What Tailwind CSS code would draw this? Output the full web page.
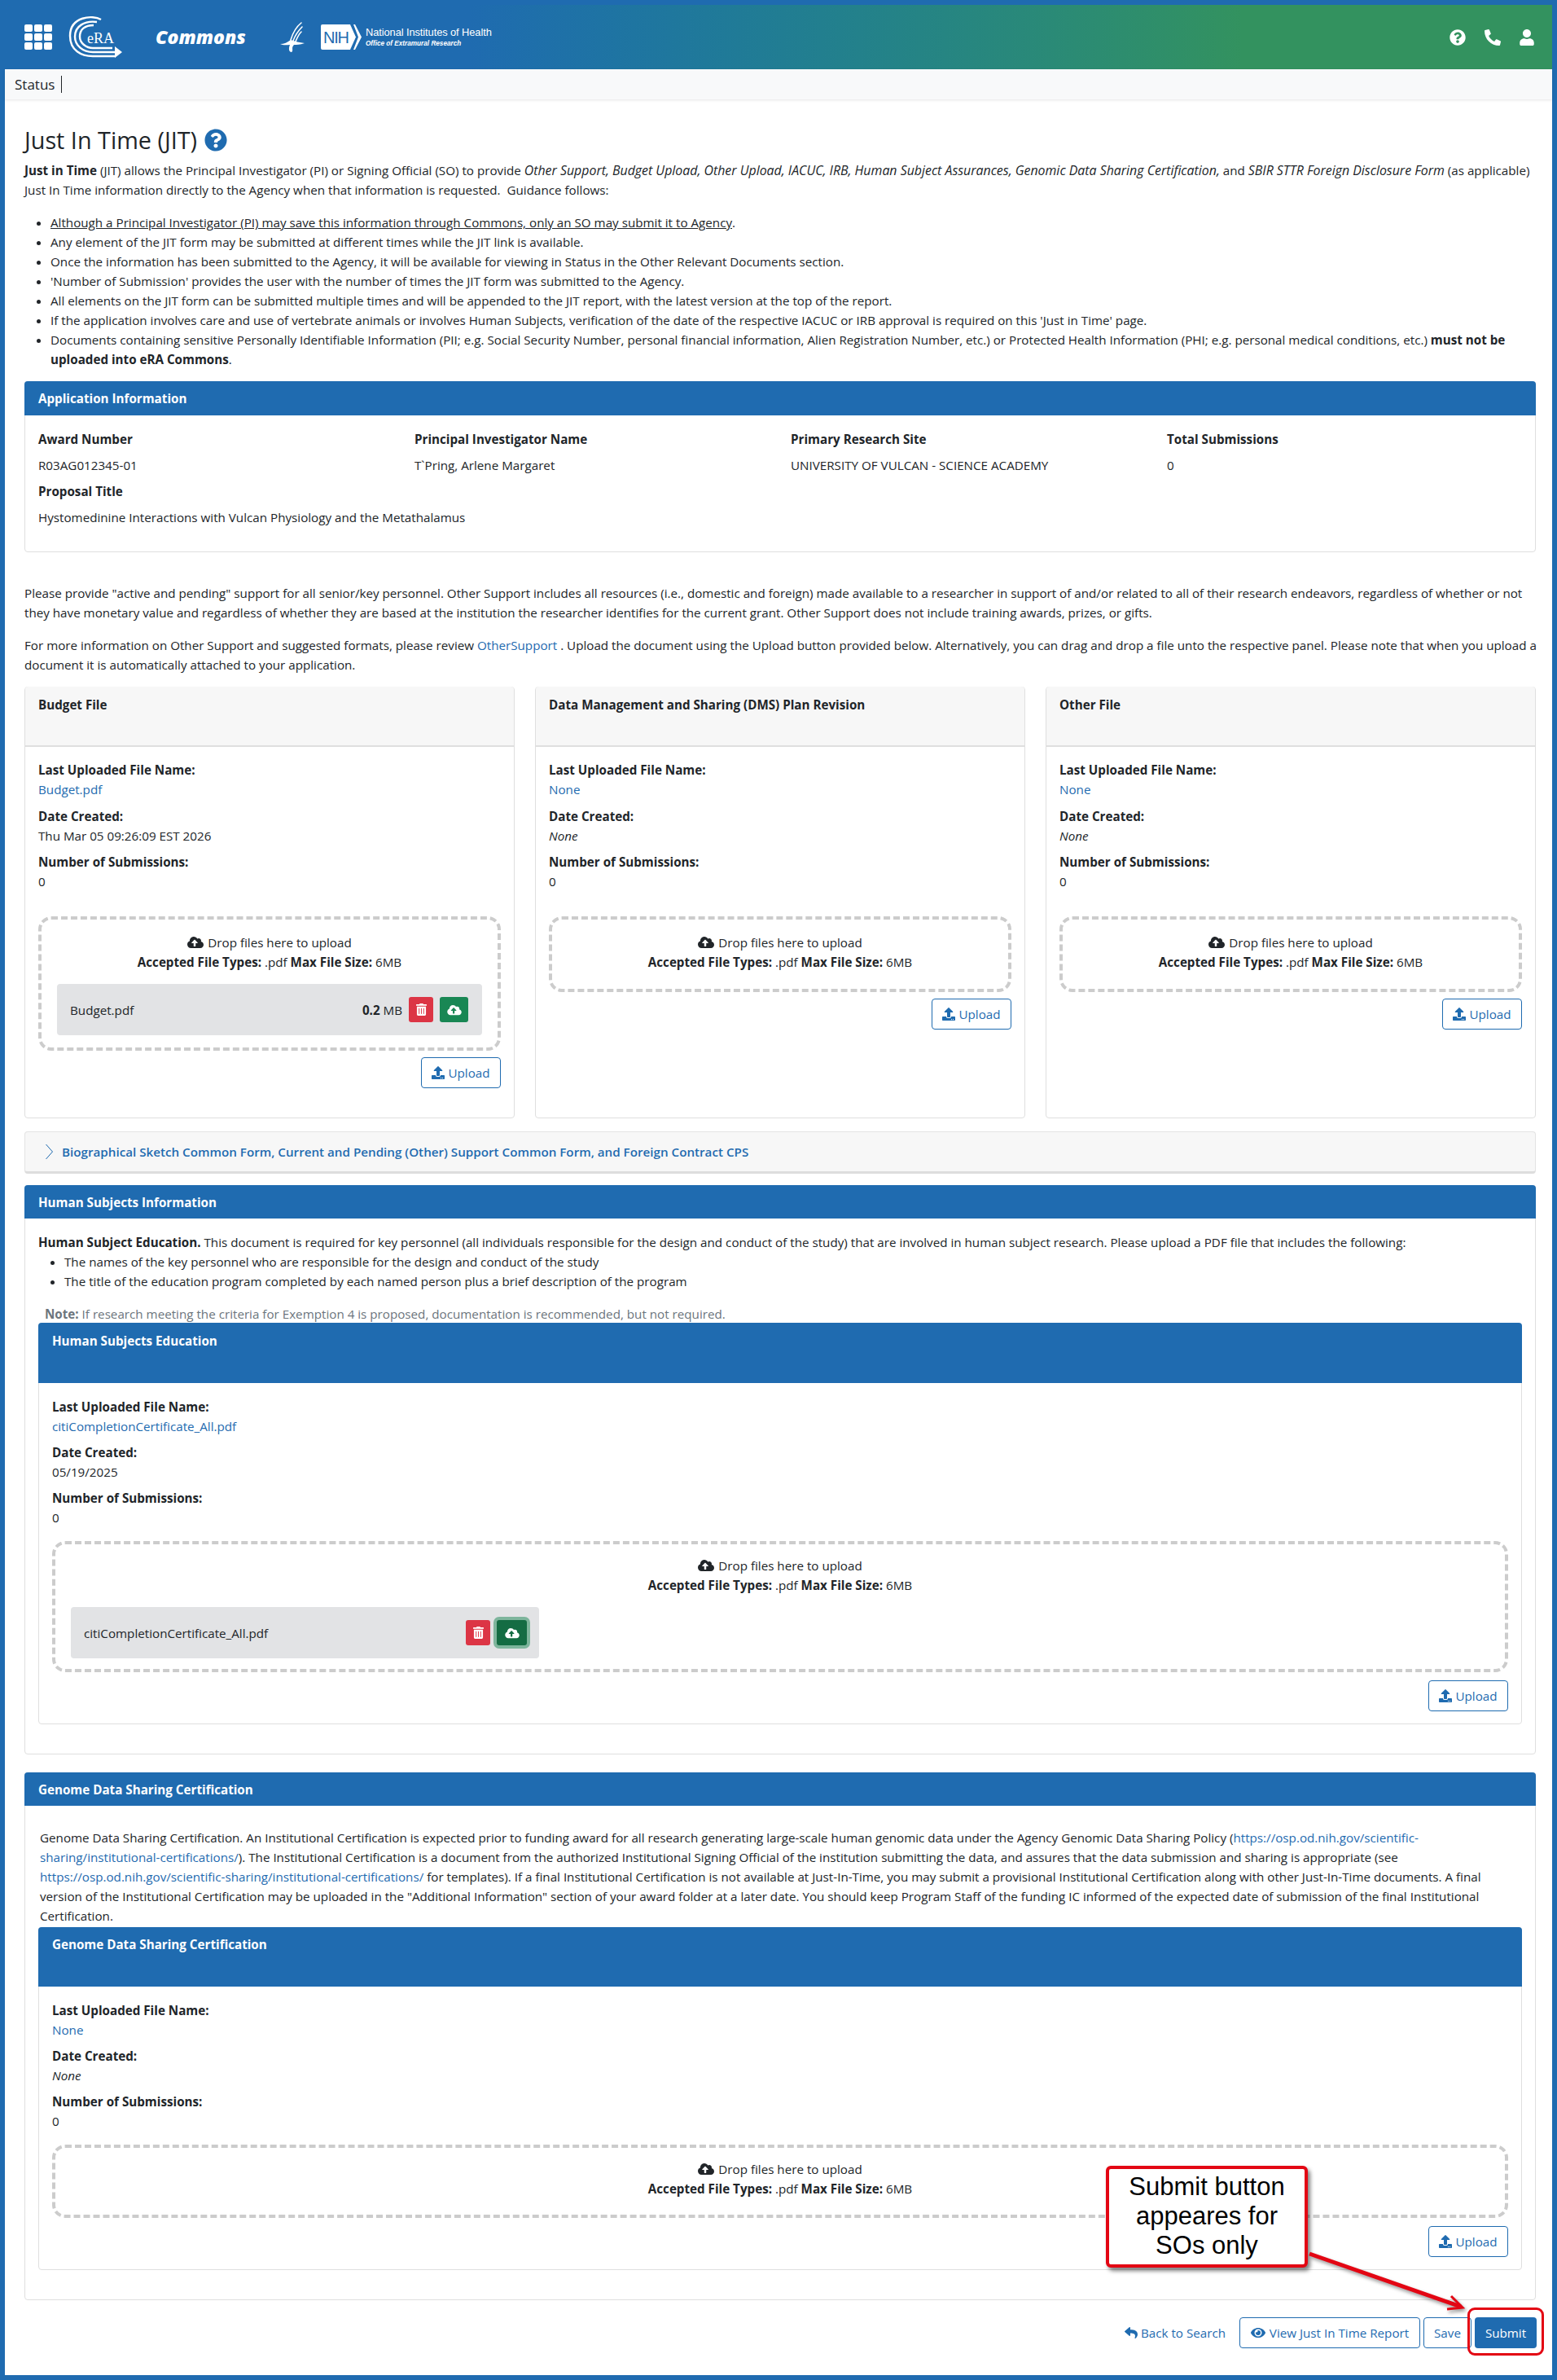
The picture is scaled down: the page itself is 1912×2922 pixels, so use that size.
<!DOCTYPE html>
<html lang="en">
  <head>
    <meta charset="UTF-8" />
    <meta name="viewport" content="width=device-width, initial-scale=1.0" />
    <title>Just In Time (JIT)</title>
    <script src="https://cdn.jsdelivr.net/npm/@tailwindcss/browser@4"></script>
  </head>
  <body class="bg-white">
    <div class="relative w-[1912px] h-[2922px] overflow-hidden font-['Open_Sans',sans-serif] text-[15.2px] leading-6 text-[#212529]">
      <div class="flex flex-col h-full border-[6px] border-[#1f6bb0] bg-white">
        <!-- header -->
        <header class="flex items-center h-[79px] shrink-0 bg-linear-to-r from-[#1f6bb0] from-[30%] to-[#33925f] to-[80%] pl-[24px] pr-[22px] text-white">
          <div class="grid grid-cols-3 gap-[2px] w-[34px]">
            <span class="h-[9px] rounded-[2px] bg-white"></span><span class="h-[9px] rounded-[2px] bg-white"></span><span class="h-[9px] rounded-[2px] bg-white"></span>
            <span class="h-[9px] rounded-[2px] bg-white"></span><span class="h-[9px] rounded-[2px] bg-white"></span><span class="h-[9px] rounded-[2px] bg-white"></span>
            <span class="h-[9px] rounded-[2px] bg-white"></span><span class="h-[9px] rounded-[2px] bg-white"></span><span class="h-[9px] rounded-[2px] bg-white"></span>
          </div>
          <svg class="ml-[20px] w-[66px] h-[55px]" viewBox="0 0 66 55" fill="none" stroke="#fff" stroke-width="2.4">
            <path d="M40 6C30 0 2 2 2 26C2 44 16 51 30 51L58 51" />
            <path d="M35 9C20 7 8 14 8 27C8 38 18 46 30 46L60 46" />
            <path d="M31 13C20 13 14 18 14 27C14 35 22 41 30 41L54 41" />
            <path d="M57 39L66 46L57 53Z" fill="#fff" stroke="none" />
            <text x="23" y="35" font-family="Liberation Serif" font-size="18" fill="#fff" stroke="none">eRA</text>
          </svg>
          <span class="ml-[41px] w-[110px] text-[23px] leading-none font-extrabold italic">Commons</span>
          <svg class="ml-[42px] w-[31px] h-[38px]" viewBox="0 0 31 38" fill="none" stroke="#fff" stroke-linecap="round">
            <path d="M27 1C22 5 17 12 14 22" stroke-width="1.6" />
            <path d="M28 6C24 10 20 15 17 23" stroke-width="1.6" />
            <path d="M27 12C24 15 22 19 20 24" stroke-width="1.6" />
            <path d="M1 27C6 27 10 25 14 22C19 24 25 25 31 26C25 28 21 28 18 28C14 32 18 35 15 37C12 37 11 33 13 28C9 28 5 29 1 27Z" fill="#fff" stroke="none" />
          </svg>
          <svg class="ml-[20px] w-[50px] h-[31px]" viewBox="0 0 50 31">
            <path d="M2 0H36L43 15.5L36 31H2Q0 31 0 29V2Q0 0 2 0Z" fill="#fff" />
            <path d="M40 0H42L50 15.5L42 31H40L46 15.5Z" fill="#fff" />
            <text x="3" y="23" font-family="Liberation Sans" font-size="20" fill="#1f6bb0" textLength="32">NIH</text>
          </svg>
          <div class="ml-[5px] flex flex-col font-['Liberation_Sans',sans-serif]">
            <span class="text-[12.9px] leading-[16px] tracking-[-0.1px]">National Institutes of Health</span>
            <span class="text-[8.2px] leading-[12px] font-bold italic">Office of Extramural Research</span>
          </div>
          <div class="ml-auto flex items-center gap-[23px]">
            <svg class="w-[20px] h-[20px]" viewBox="0 0 512 512" fill="#fff"><path d="M504 256c0 136.997-111.043 248-248 248S8 392.997 8 256C8 119.083 119.043 8 256 8s248 111.083 248 248zM262.655 90c-54.497 0-89.255 22.957-116.549 63.758-3.536 5.286-2.353 12.415 2.715 16.258l34.699 26.31c5.205 3.947 12.621 3.008 16.665-2.122 17.864-22.658 30.113-35.797 57.303-35.797 20.429 0 45.698 13.148 45.698 32.958 0 14.976-12.363 22.667-32.534 33.976C247.128 238.528 216 254.941 216 296v4c0 6.627 5.373 12 12 12h56c6.627 0 12-5.373 12-12v-1.333c0-28.462 83.186-29.647 83.186-106.667 0-58.002-60.165-102-116.531-102zM256 338c-25.365 0-46 20.635-46 46 0 25.364 20.635 46 46 46s46-20.636 46-46c0-25.365-20.635-46-46-46z" /></svg>
            <svg class="w-[20px] h-[20px] -scale-x-100" viewBox="0 0 512 512" fill="#fff"><path d="M493.4 24.6l-104-24c-11.3-2.6-22.9 3.3-27.5 13.9l-48 112c-4.2 9.8-1.4 21.3 6.9 28l60.6 49.6c-36 76.7-98.9 140.5-177.2 177.2l-49.6-60.6c-6.8-8.3-18.2-11.1-28-6.9l-112 48C3.9 366.5-2 378.1.6 389.4l24 104C27.1 504.2 36.7 512 48 512c256.1 0 464-207.5 464-464 0-11.2-7.7-20.9-18.6-23.4z" /></svg>
            <svg class="w-[18px] h-[20px]" viewBox="0 0 448 512" fill="#fff"><path d="M224 256c70.7 0 128-57.3 128-128S294.7 0 224 0 96 57.3 96 128s57.3 128 128 128zm89.6 32h-16.7c-22.2 10.2-46.9 16-72.9 16s-50.6-5.8-72.9-16h-16.7C60.2 288 0 348.2 0 422.4V464c0 26.5 21.5 48 48 48h352c26.5 0 48-21.5 48-48v-41.6c0-74.2-60.2-134.4-134.4-134.4z" /></svg>
          </div>
        </header>

        <!-- status bar -->
        <nav class="flex items-center h-[37px] shrink-0 bg-[#f8f9fa] pl-[12px] shadow-[0_1px_3px_rgba(0,0,0,0.1)] text-[17px]">
          <span>Status</span>
          <span class="ml-[8px] w-px h-[21px] bg-[#212529]"></span>
        </nav>

        <main class="flex flex-col pl-6 pr-5">
          <div class="flex items-center gap-[9px] mt-[33px] h-[34px]">
            <h1 class="text-[28.8px] leading-[34px]">Just In Time (JIT)</h1>
            <svg class="w-[28px] h-[28px]" viewBox="0 0 512 512" fill="#1f6bb0"><path d="M504 256c0 136.997-111.043 248-248 248S8 392.997 8 256C8 119.083 119.043 8 256 8s248 111.083 248 248zM262.655 90c-54.497 0-89.255 22.957-116.549 63.758-3.536 5.286-2.353 12.415 2.715 16.258l34.699 26.31c5.205 3.947 12.621 3.008 16.665-2.122 17.864-22.658 30.113-35.797 57.303-35.797 20.429 0 45.698 13.148 45.698 32.958 0 14.976-12.363 22.667-32.534 33.976C247.128 238.528 216 254.941 216 296v4c0 6.627 5.373 12 12 12h56c6.627 0 12-5.373 12-12v-1.333c0-28.462 83.186-29.647 83.186-106.667 0-58.002-60.165-102-116.531-102zM256 338c-25.365 0-46 20.635-46 46 0 25.364 20.635 46 46 46s46-20.636 46-46c0-25.365-20.635-46-46-46z" /></svg>
          </div>
          <p class="mt-[8px] whitespace-nowrap"><b class="font-bold">Just in Time</b> (JIT) allows the Principal Investigator (PI) or Signing Official (SO) to provide <i class="text-[15.9px]">Other Support, Budget Upload, Other Upload, IACUC, IRB, Human Subject Assurances, Genomic Data Sharing Certification,</i> and <i class="text-[15.9px]">SBIR STTR Foreign Disclosure Form</i> (as applicable)<br />Just In Time information directly to the Agency when that information is requested.&nbsp; Guidance follows:</p>
          <ul class="mt-[16px] pl-[32px] list-disc whitespace-nowrap">
            <li><u>Although a Principal Investigator (PI) may save this information through Commons, only an SO may submit it to Agency</u>.</li>
            <li>Any element of the JIT form may be submitted at different times while the JIT link is available.</li>
            <li>Once the information has been submitted to the Agency, it will be available for viewing in Status in the Other Relevant Documents section.</li>
            <li>'Number of Submission' provides the user with the number of times the JIT form was submitted to the Agency.</li>
            <li>All elements on the JIT form can be submitted multiple times and will be appended to the JIT report, with the latest version at the top of the report.</li>
            <li>If the application involves care and use of vertebrate animals or involves Human Subjects, verification of the date of the respective IACUC or IRB approval is required on this 'Just in Time' page.</li>
            <li>Documents containing sensitive Personally Identifiable Information (PII; e.g. Social Security Number, personal financial information, Alien Registration Number, etc.) or Protected Health Information (PHI; e.g. personal medical conditions, etc.) <b class="font-bold">must not be<br />uploaded into eRA Commons</b>.</li>
          </ul>

          <!-- application information -->
          <section class="mt-[15px] h-[210px] border border-[#dfdfdf] rounded-[4px]">
            <div class="h-[42px] -mt-px -mx-px flex items-center px-[17px] bg-[#1f6bb0] text-white font-bold rounded-t-[4px]">Application Information</div>
            <div class="px-4 pt-[17px]">
              <div class="grid grid-cols-[462px_462px_462px_1fr]">
                <div><div class="font-bold">Award Number</div><div class="mt-2">R03AG012345-01</div></div>
                <div><div class="font-bold">Principal Investigator Name</div><div class="mt-2">T`Pring, Arlene Margaret</div></div>
                <div><div class="font-bold">Primary Research Site</div><div class="mt-2">UNIVERSITY OF VULCAN - SCIENCE ACADEMY</div></div>
                <div><div class="font-bold">Total Submissions</div><div class="mt-2">0</div></div>
              </div>
              <div class="mt-2 font-bold">Proposal Title</div>
              <div class="mt-2">Hystomedinine Interactions with Vulcan Physiology and the Metathalamus</div>
            </div>
          </section>

          <p class="mt-[38px] whitespace-nowrap">Please provide "active and pending" support for all senior/key personnel. Other Support includes all resources (i.e., domestic and foreign) made available to a researcher in support of and/or related to all of their research endeavors, regardless of whether or not<br />they have monetary value and regardless of whether they are based at the institution the researcher identifies for the current grant. Other Support does not include training awards, prizes, or gifts.</p>
          <p class="mt-4 whitespace-nowrap">For more information on Other Support and suggested formats, please review <a class="text-[#1f6bb0]">OtherSupport</a> . Upload the document using the Upload button provided below. Alternatively, you can drag and drop a file unto the respective panel. Please note that when you upload a<br />document it is automatically attached to your application.</p>

          <!-- upload cards -->
          <div class="mt-[15px] grid grid-cols-3 gap-[25px] h-[530px]">
            <section class="border border-[#dfdfdf] rounded-[4px]">
              <div class="h-[74px] -mt-px pt-[10px] px-4 bg-[#f7f7f7] border-b-2 border-[#dfdfdf] font-bold rounded-t-[4px]">Budget File</div>
              <div class="px-4 pt-[16px]">
                <div class="font-bold">Last Uploaded File Name:</div>
                <a class="block text-[#1f6bb0]">Budget.pdf</a>
                <div class="mt-[9px] font-bold">Date Created:</div>
                <div>Thu Mar 05 09:26:09 EST 2026</div>
                <div class="mt-[8px] font-bold">Number of Submissions:</div>
                <div>0</div>
                <div class="mt-[31px] border-[4px] border-dashed border-[#cccccc] rounded-[16px] px-[19px] pt-[16px] pb-[15px] text-center">
                  <div class="flex items-center justify-center gap-[5px]">
                    <svg class="w-[20px] h-[16px]" viewBox="0 0 640 512" fill="#212529"><path d="M537.6 226.6c4.1-10.7 6.4-22.4 6.4-34.6 0-53-43-96-96-96-19.7 0-38.1 6-53.3 16.2C367 64.2 315.3 32 256 32c-88.4 0-160 71.6-160 160 0 2.7.1 5.4.2 8.1C40.2 219.8 0 273.2 0 336c0 79.5 64.5 144 144 144h368c70.7 0 128-57.3 128-128 0-61.9-44-113.6-102.4-125.4zM393.4 288H328v112c0 8.8-7.2 16-16 16h-48c-8.8 0-16-7.2-16-16V288h-65.4c-14.3 0-21.4-17.2-11.3-27.3l105.4-105.4c6.2-6.2 16.4-6.2 22.6 0l105.4 105.4c10.1 10.1 2.9 27.3-11.3 27.3z" /></svg>
                    Drop files here to upload
                  </div>
                  <div><b class="font-bold">Accepted File Types:</b> .pdf <b class="font-bold">Max File Size:</b> 6MB</div>
                  <div class="mt-[15px] flex items-center h-[63px] bg-[#e2e3e5] rounded-[4px] pl-[16px] pr-[17px]">
                    <span>Budget.pdf</span>
                    <span class="ml-auto"><b class="font-bold">0.2</b> MB</span>
                    <span class="ml-[8px] flex items-center justify-center w-[30px] h-[31px] bg-[#dc3545] rounded-[3px]">
                      <svg class="w-[13px] h-[15px]" viewBox="0 0 448 512" fill="#fff"><path d="M32 464a48 48 0 0 0 48 48h288a48 48 0 0 0 48-48V128H32zm272-256a16 16 0 0 1 32 0v224a16 16 0 0 1-32 0zm-96 0a16 16 0 0 1 32 0v224a16 16 0 0 1-32 0zm-96 0a16 16 0 0 1 32 0v224a16 16 0 0 1-32 0zM432 32H312l-9-19a24 24 0 0 0-22-13H167a24 24 0 0 0-22 13l-9 19H16A16 16 0 0 0 0 48v32a16 16 0 0 0 16 16h416a16 16 0 0 0 16-16V48a16 16 0 0 0-16-16z" /></svg>
                    </span>
                    <span class="ml-[8px] flex items-center justify-center w-[35px] h-[31px] bg-[#198754] rounded-[3px]">
                      <svg class="w-[18px] h-[14px]" viewBox="0 0 640 512" fill="#fff"><path d="M537.6 226.6c4.1-10.7 6.4-22.4 6.4-34.6 0-53-43-96-96-96-19.7 0-38.1 6-53.3 16.2C367 64.2 315.3 32 256 32c-88.4 0-160 71.6-160 160 0 2.7.1 5.4.2 8.1C40.2 219.8 0 273.2 0 336c0 79.5 64.5 144 144 144h368c70.7 0 128-57.3 128-128 0-61.9-44-113.6-102.4-125.4zM393.4 288H328v112c0 8.8-7.2 16-16 16h-48c-8.8 0-16-7.2-16-16V288h-65.4c-14.3 0-21.4-17.2-11.3-27.3l105.4-105.4c6.2-6.2 16.4-6.2 22.6 0l105.4 105.4c10.1 10.1 2.9 27.3-11.3 27.3z" /></svg>
                    </span>
                  </div>
                </div>
                <div class="mt-[8px] flex justify-end">
                  <button class="flex items-center justify-center gap-[4px] w-[98px] h-[38px] border border-[#1f6bb0] rounded-[4px] text-[#1f6bb0]">
                    <svg class="w-[16px] h-[16px]" viewBox="0 0 512 512" fill="#1f6bb0"><path d="M296 384h-80c-13.3 0-24-10.7-24-24V192h-87.7c-17.8 0-26.7-21.5-14.1-34.1L242.3 5.7c7.5-7.5 19.8-7.5 27.3 0l152.2 152.2c12.6 12.6 3.7 34.1-14.1 34.1H320v168c0 13.3-10.7 24-24 24zm216-8v112c0 13.3-10.7 24-24 24H24c-13.3 0-24-10.7-24-24V376c0-13.3 10.7-24 24-24h136v8c0 30.9 25.1 56 56 56h80c30.9 0 56-25.1 56-56v-8h136c13.3 0 24 10.7 24 24zm-124 88c0-11-9-20-20-20s-20 9-20 20 9 20 20 20 20-9 20-20zm64 0c0-11-9-20-20-20s-20 9-20 20 9 20 20 20 20-9 20-20z" /></svg>
                    Upload
                  </button>
                </div>
              </div>
            </section>

            <section class="border border-[#dfdfdf] rounded-[4px]">
              <div class="h-[74px] -mt-px pt-[10px] px-4 bg-[#f7f7f7] border-b-2 border-[#dfdfdf] font-bold rounded-t-[4px]">Data Management and Sharing (DMS) Plan Revision</div>
              <div class="px-4 pt-[16px]">
                <div class="font-bold">Last Uploaded File Name:</div>
                <a class="block text-[#1f6bb0]">None</a>
                <div class="mt-[9px] font-bold">Date Created:</div>
                <div class="italic">None</div>
                <div class="mt-[8px] font-bold">Number of Submissions:</div>
                <div>0</div>
                <div class="mt-[31px] border-[4px] border-dashed border-[#cccccc] rounded-[16px] px-[19px] pt-[16px] pb-[21px] text-center">
                  <div class="flex items-center justify-center gap-[5px]">
                    <svg class="w-[20px] h-[16px]" viewBox="0 0 640 512" fill="#212529"><path d="M537.6 226.6c4.1-10.7 6.4-22.4 6.4-34.6 0-53-43-96-96-96-19.7 0-38.1 6-53.3 16.2C367 64.2 315.3 32 256 32c-88.4 0-160 71.6-160 160 0 2.7.1 5.4.2 8.1C40.2 219.8 0 273.2 0 336c0 79.5 64.5 144 144 144h368c70.7 0 128-57.3 128-128 0-61.9-44-113.6-102.4-125.4zM393.4 288H328v112c0 8.8-7.2 16-16 16h-48c-8.8 0-16-7.2-16-16V288h-65.4c-14.3 0-21.4-17.2-11.3-27.3l105.4-105.4c6.2-6.2 16.4-6.2 22.6 0l105.4 105.4c10.1 10.1 2.9 27.3-11.3 27.3z" /></svg>
                    Drop files here to upload
                  </div>
                  <div><b class="font-bold">Accepted File Types:</b> .pdf <b class="font-bold">Max File Size:</b> 6MB</div>
                </div>
                <div class="mt-[8px] flex justify-end">
                  <button class="flex items-center justify-center gap-[4px] w-[98px] h-[38px] border border-[#1f6bb0] rounded-[4px] text-[#1f6bb0]">
                    <svg class="w-[16px] h-[16px]" viewBox="0 0 512 512" fill="#1f6bb0"><path d="M296 384h-80c-13.3 0-24-10.7-24-24V192h-87.7c-17.8 0-26.7-21.5-14.1-34.1L242.3 5.7c7.5-7.5 19.8-7.5 27.3 0l152.2 152.2c12.6 12.6 3.7 34.1-14.1 34.1H320v168c0 13.3-10.7 24-24 24zm216-8v112c0 13.3-10.7 24-24 24H24c-13.3 0-24-10.7-24-24V376c0-13.3 10.7-24 24-24h136v8c0 30.9 25.1 56 56 56h80c30.9 0 56-25.1 56-56v-8h136c13.3 0 24 10.7 24 24zm-124 88c0-11-9-20-20-20s-20 9-20 20 9 20 20 20 20-9 20-20zm64 0c0-11-9-20-20-20s-20 9-20 20 9 20 20 20 20-9 20-20z" /></svg>
                    Upload
                  </button>
                </div>
              </div>
            </section>

            <section class="border border-[#dfdfdf] rounded-[4px]">
              <div class="h-[74px] -mt-px pt-[10px] px-4 bg-[#f7f7f7] border-b-2 border-[#dfdfdf] font-bold rounded-t-[4px]">Other File</div>
              <div class="px-4 pt-[16px]">
                <div class="font-bold">Last Uploaded File Name:</div>
                <a class="block text-[#1f6bb0]">None</a>
                <div class="mt-[9px] font-bold">Date Created:</div>
                <div class="italic">None</div>
                <div class="mt-[8px] font-bold">Number of Submissions:</div>
                <div>0</div>
                <div class="mt-[31px] border-[4px] border-dashed border-[#cccccc] rounded-[16px] px-[19px] pt-[16px] pb-[21px] text-center">
                  <div class="flex items-center justify-center gap-[5px]">
                    <svg class="w-[20px] h-[16px]" viewBox="0 0 640 512" fill="#212529"><path d="M537.6 226.6c4.1-10.7 6.4-22.4 6.4-34.6 0-53-43-96-96-96-19.7 0-38.1 6-53.3 16.2C367 64.2 315.3 32 256 32c-88.4 0-160 71.6-160 160 0 2.7.1 5.4.2 8.1C40.2 219.8 0 273.2 0 336c0 79.5 64.5 144 144 144h368c70.7 0 128-57.3 128-128 0-61.9-44-113.6-102.4-125.4zM393.4 288H328v112c0 8.8-7.2 16-16 16h-48c-8.8 0-16-7.2-16-16V288h-65.4c-14.3 0-21.4-17.2-11.3-27.3l105.4-105.4c6.2-6.2 16.4-6.2 22.6 0l105.4 105.4c10.1 10.1 2.9 27.3-11.3 27.3z" /></svg>
                    Drop files here to upload
                  </div>
                  <div><b class="font-bold">Accepted File Types:</b> .pdf <b class="font-bold">Max File Size:</b> 6MB</div>
                </div>
                <div class="mt-[8px] flex justify-end">
                  <button class="flex items-center justify-center gap-[4px] w-[98px] h-[38px] border border-[#1f6bb0] rounded-[4px] text-[#1f6bb0]">
                    <svg class="w-[16px] h-[16px]" viewBox="0 0 512 512" fill="#1f6bb0"><path d="M296 384h-80c-13.3 0-24-10.7-24-24V192h-87.7c-17.8 0-26.7-21.5-14.1-34.1L242.3 5.7c7.5-7.5 19.8-7.5 27.3 0l152.2 152.2c12.6 12.6 3.7 34.1-14.1 34.1H320v168c0 13.3-10.7 24-24 24zm216-8v112c0 13.3-10.7 24-24 24H24c-13.3 0-24-10.7-24-24V376c0-13.3 10.7-24 24-24h136v8c0 30.9 25.1 56 56 56h80c30.9 0 56-25.1 56-56v-8h136c13.3 0 24 10.7 24 24zm-124 88c0-11-9-20-20-20s-20 9-20 20 9 20 20 20 20-9 20-20zm64 0c0-11-9-20-20-20s-20 9-20 20 9 20 20 20 20-9 20-20z" /></svg>
                    Upload
                  </button>
                </div>
              </div>
            </section>
          </div>

          <!-- accordion -->
          <div class="mt-[16px] h-[52px] flex items-center pl-[25px] bg-[#f7f7f7] border border-[#e3e3e3] border-b-[3px] border-b-[#dddddd] rounded-[4px] text-[#1f6bb0] font-semibold">
            <svg class="w-[9px] h-[20px]" viewBox="0 0 9 20" fill="none" stroke="#1f6bb0" stroke-width="1"><path d="M0.5 1L8.5 10L0.5 19" /></svg>
            <span class="ml-[11px]">Biographical Sketch Common Form, Current and Pending (Other) Support Common Form, and Foreign Contract CPS</span>
          </div>

          <!-- human subjects -->
          <section class="mt-[14px] h-[699px] border border-[#dfdfdf] rounded-[4px]">
            <div class="h-[41px] -mt-px -mx-px flex items-center px-[17px] bg-[#1f6bb0] text-white font-bold rounded-t-[4px]">Human Subjects Information</div>
            <div class="pl-[16px] pr-[16px] pt-[17px]">
              <p class="whitespace-nowrap"><b class="font-bold">Human Subject Education.</b> This document is required for key personnel (all individuals responsible for the design and conduct of the study) that are involved in human subject research. Please upload a PDF file that includes the following:</p>
              <ul class="pl-[32px] list-disc">
                <li>The names of the key personnel who are responsible for the design and conduct of the study</li>
                <li>The title of the education program completed by each named person plus a brief description of the program</li>
              </ul>
              <p class="mt-[16px] pl-[8px] h-[23px] text-[#6c757d]"><b class="font-bold">Note:</b> If research meeting the criteria for Exemption 4 is proposed, documentation is recommended, but not required.</p>
              <div class="h-[493px] border border-[#dfdfdf] rounded-[4px]">
                <div class="h-[74px] -mt-px -mx-px pt-[10px] px-[17px] bg-[#1f6bb0] text-white font-bold rounded-t-[4px]">Human Subjects Education</div>
                <div class="px-4 pt-[17px]">
                  <div class="font-bold">Last Uploaded File Name:</div>
                  <a class="block text-[#1f6bb0]">citiCompletionCertificate_All.pdf</a>
                  <div class="mt-2 font-bold">Date Created:</div>
                  <div>05/19/2025</div>
                  <div class="mt-2 font-bold">Number of Submissions:</div>
                  <div>0</div>
                  <div class="mt-[17px] border-[4px] border-dashed border-[#cccccc] rounded-[16px] px-[19px] pt-[14px] pb-[13px]">
                    <div class="flex items-center justify-center gap-[5px]">
                      <svg class="w-[20px] h-[16px]" viewBox="0 0 640 512" fill="#212529"><path d="M537.6 226.6c4.1-10.7 6.4-22.4 6.4-34.6 0-53-43-96-96-96-19.7 0-38.1 6-53.3 16.2C367 64.2 315.3 32 256 32c-88.4 0-160 71.6-160 160 0 2.7.1 5.4.2 8.1C40.2 219.8 0 273.2 0 336c0 79.5 64.5 144 144 144h368c70.7 0 128-57.3 128-128 0-61.9-44-113.6-102.4-125.4zM393.4 288H328v112c0 8.8-7.2 16-16 16h-48c-8.8 0-16-7.2-16-16V288h-65.4c-14.3 0-21.4-17.2-11.3-27.3l105.4-105.4c6.2-6.2 16.4-6.2 22.6 0l105.4 105.4c10.1 10.1 2.9 27.3-11.3 27.3z" /></svg>
                      Drop files here to upload
                    </div>
                    <div class="text-center"><b class="font-bold">Accepted File Types:</b> .pdf <b class="font-bold">Max File Size:</b> 6MB</div>
                    <div class="mt-[15px] flex items-center w-[575px] h-[63px] bg-[#e2e3e5] rounded-[4px] pl-[16px] pr-[15px]">
                      <span>citiCompletionCertificate_All.pdf</span>
                      <span class="ml-auto flex items-center justify-center w-[30px] h-[31px] bg-[#dc3545] rounded-[3px]">
                        <svg class="w-[13px] h-[15px]" viewBox="0 0 448 512" fill="#fff"><path d="M32 464a48 48 0 0 0 48 48h288a48 48 0 0 0 48-48V128H32zm272-256a16 16 0 0 1 32 0v224a16 16 0 0 1-32 0zm-96 0a16 16 0 0 1 32 0v224a16 16 0 0 1-32 0zm-96 0a16 16 0 0 1 32 0v224a16 16 0 0 1-32 0zM432 32H312l-9-19a24 24 0 0 0-22-13H167a24 24 0 0 0-22 13l-9 19H16A16 16 0 0 0 0 48v32a16 16 0 0 0 16 16h416a16 16 0 0 0 16-16V48a16 16 0 0 0-16-16z" /></svg>
                      </span>
                      <span class="ml-[8px] flex items-center justify-center w-[37px] h-[31px] bg-[#146c43] rounded-[3px] ring-4 ring-[#198754]/50">
                        <svg class="w-[18px] h-[14px]" viewBox="0 0 640 512" fill="#fff"><path d="M537.6 226.6c4.1-10.7 6.4-22.4 6.4-34.6 0-53-43-96-96-96-19.7 0-38.1 6-53.3 16.2C367 64.2 315.3 32 256 32c-88.4 0-160 71.6-160 160 0 2.7.1 5.4.2 8.1C40.2 219.8 0 273.2 0 336c0 79.5 64.5 144 144 144h368c70.7 0 128-57.3 128-128 0-61.9-44-113.6-102.4-125.4zM393.4 288H328v112c0 8.8-7.2 16-16 16h-48c-8.8 0-16-7.2-16-16V288h-65.4c-14.3 0-21.4-17.2-11.3-27.3l105.4-105.4c6.2-6.2 16.4-6.2 22.6 0l105.4 105.4c10.1 10.1 2.9 27.3-11.3 27.3z" /></svg>
                      </span>
                    </div>
                  </div>
                  <div class="mt-[10px] flex justify-end">
                    <button class="flex items-center justify-center gap-[4px] w-[98px] h-[38px] border border-[#1f6bb0] rounded-[4px] text-[#1f6bb0]">
                      <svg class="w-[16px] h-[16px]" viewBox="0 0 512 512" fill="#1f6bb0"><path d="M296 384h-80c-13.3 0-24-10.7-24-24V192h-87.7c-17.8 0-26.7-21.5-14.1-34.1L242.3 5.7c7.5-7.5 19.8-7.5 27.3 0l152.2 152.2c12.6 12.6 3.7 34.1-14.1 34.1H320v168c0 13.3-10.7 24-24 24zm216-8v112c0 13.3-10.7 24-24 24H24c-13.3 0-24-10.7-24-24V376c0-13.3 10.7-24 24-24h136v8c0 30.9 25.1 56 56 56h80c30.9 0 56-25.1 56-56v-8h136c13.3 0 24 10.7 24 24zm-124 88c0-11-9-20-20-20s-20 9-20 20 9 20 20 20 20-9 20-20zm64 0c0-11-9-20-20-20s-20 9-20 20 9 20 20 20 20-9 20-20z" /></svg>
                      Upload
                    </button>
                  </div>
                </div>
              </div>
            </div>
          </section>

          <!-- genome data sharing -->
          <section class="mt-[22px] h-[648px] border border-[#dfdfdf] rounded-[4px]">
            <div class="h-[41px] -mt-px -mx-px flex items-center px-[17px] bg-[#1f6bb0] text-white font-bold rounded-t-[4px]">Genome Data Sharing Certification</div>
            <div class="px-[16px] pt-[27px]">
              <p class="pl-[2px] whitespace-nowrap">Genome Data Sharing Certification. An Institutional Certification is expected prior to funding award for all research generating large-scale human genomic data under the Agency Genomic Data Sharing Policy (<a class="text-[#1f6bb0]">https://osp.od.nih.gov/scientific-<br />sharing/institutional-certifications/</a>). The Institutional Certification is a document from the authorized Institutional Signing Official of the institution submitting the data, and assures that the data submission and sharing is appropriate (see<br /><a class="text-[#1f6bb0]">https://osp.od.nih.gov/scientific-sharing/institutional-certifications/</a> for templates). If a final Institutional Certification is not available at Just-In-Time, you may submit a provisional Institutional Certification along with other Just-In-Time documents. A final<br />version of the Institutional Certification may be uploaded in the "Additional Information" section of your award folder at a later date. You should keep Program Staff of the funding IC informed of the expected date of submission of the final Institutional<br />Certification.</p>
              <div class="mt-[2px] h-[421px] border border-[#dfdfdf] rounded-[4px]">
                <div class="h-[73px] -mt-px -mx-px pt-[9px] px-[17px] bg-[#1f6bb0] text-white font-bold rounded-t-[4px]">Genome Data Sharing Certification</div>
                <div class="px-4 pt-[17px]">
                  <div class="font-bold">Last Uploaded File Name:</div>
                  <a class="block text-[#1f6bb0]">None</a>
                  <div class="mt-2 font-bold">Date Created:</div>
                  <div class="italic">None</div>
                  <div class="mt-2 font-bold">Number of Submissions:</div>
                  <div>0</div>
                  <div class="mt-[17px] h-[90px] border-[4px] border-dashed border-[#cccccc] rounded-[16px] px-[19px] pt-[14px] text-center">
                    <div class="flex items-center justify-center gap-[5px]">
                      <svg class="w-[20px] h-[16px]" viewBox="0 0 640 512" fill="#212529"><path d="M537.6 226.6c4.1-10.7 6.4-22.4 6.4-34.6 0-53-43-96-96-96-19.7 0-38.1 6-53.3 16.2C367 64.2 315.3 32 256 32c-88.4 0-160 71.6-160 160 0 2.7.1 5.4.2 8.1C40.2 219.8 0 273.2 0 336c0 79.5 64.5 144 144 144h368c70.7 0 128-57.3 128-128 0-61.9-44-113.6-102.4-125.4zM393.4 288H328v112c0 8.8-7.2 16-16 16h-48c-8.8 0-16-7.2-16-16V288h-65.4c-14.3 0-21.4-17.2-11.3-27.3l105.4-105.4c6.2-6.2 16.4-6.2 22.6 0l105.4 105.4c10.1 10.1 2.9 27.3-11.3 27.3z" /></svg>
                      Drop files here to upload
                    </div>
                    <div><b class="font-bold">Accepted File Types:</b> .pdf <b class="font-bold">Max File Size:</b> 6MB</div>
                  </div>
                  <div class="mt-[10px] flex justify-end">
                    <button class="flex items-center justify-center gap-[4px] w-[98px] h-[38px] border border-[#1f6bb0] rounded-[4px] text-[#1f6bb0]">
                      <svg class="w-[16px] h-[16px]" viewBox="0 0 512 512" fill="#1f6bb0"><path d="M296 384h-80c-13.3 0-24-10.7-24-24V192h-87.7c-17.8 0-26.7-21.5-14.1-34.1L242.3 5.7c7.5-7.5 19.8-7.5 27.3 0l152.2 152.2c12.6 12.6 3.7 34.1-14.1 34.1H320v168c0 13.3-10.7 24-24 24zm216-8v112c0 13.3-10.7 24-24 24H24c-13.3 0-24-10.7-24-24V376c0-13.3 10.7-24 24-24h136v8c0 30.9 25.1 56 56 56h80c30.9 0 56-25.1 56-56v-8h136c13.3 0 24 10.7 24 24zm-124 88c0-11-9-20-20-20s-20 9-20 20 9 20 20 20 20-9 20-20zm64 0c0-11-9-20-20-20s-20 9-20 20 9 20 20 20 20-9 20-20z" /></svg>
                      Upload
                    </button>
                  </div>
                </div>
              </div>
            </div>
          </section>

          <!-- page actions -->
          <div class="mt-[21px] -mr-px flex justify-end items-center h-[38px]">
            <a class="flex items-center gap-[4px] text-[#1f6bb0]">
              <svg class="w-[16px] h-[16px]" viewBox="0 0 512 512" fill="#1f6bb0"><path d="M8.309 189.836L184.313 37.851C199.719 24.546 224 35.347 224 56.015v80.053c160.629 1.839 288 34.032 288 186.258 0 61.441-39.581 122.309-83.333 154.132-13.653 9.931-33.111-2.533-28.077-18.631 45.344-145.012-21.507-183.51-176.59-185.742V360c0 20.7-24.3 31.453-39.687 18.164l-176.004-152c-11.071-9.562-11.086-26.753 0-36.328z" /></svg>
              Back to Search
            </a>
            <button class="ml-[17px] flex items-center justify-center gap-[5px] w-[222px] h-[38px] border border-[#1f6bb0] rounded-[4px] text-[#1f6bb0]">
              <svg class="w-[18px] h-[16px]" viewBox="0 0 576 512" fill="#1f6bb0"><path d="M572.52 241.4C518.29 135.59 410.93 64 288 64S57.68 135.64 3.48 241.41a32.35 32.35 0 0 0 0 29.19C57.71 376.41 165.07 448 288 448s230.32-71.64 284.52-177.41a32.35 32.35 0 0 0 0-29.19zM288 400a144 144 0 1 1 144-144 143.93 143.93 0 0 1-144 144zm0-240a95.31 95.31 0 0 0-25.31 3.79 47.85 47.85 0 0 1-66.9 66.9A95.78 95.78 0 1 0 288 160z" /></svg>
              View Just In Time Report
            </button>
            <button class="ml-[4px] w-[59px] h-[38px] border border-[#1f6bb0] rounded-[4px] text-[#1f6bb0]">Save</button>
            <button class="ml-[4px] w-[76px] h-[38px] bg-[#1f6bb0] rounded-[4px] text-white">Submit</button>
          </div>
        </main>
      </div>

      <!-- annotation laid over the page -->
      <div class="absolute left-[1358px] top-[2659px] w-[248px] h-[125px] flex items-center justify-center pb-[2px] bg-white border-[4px] border-[#e30613] rounded-[6px] shadow-[3px_4px_5px_rgba(0,0,0,0.5)] font-['Liberation_Sans',sans-serif] text-[31px] leading-[36px] text-center text-black">Submit button<br />appeares for<br />SOs only</div>
      <svg class="absolute left-[1600px] top-[2760px] w-[210px] h-[85px] drop-shadow-[2px_3px_2px_rgba(0,0,0,0.4)]" viewBox="0 0 210 85" fill="none" stroke="#e30613" stroke-width="5">
        <path d="M8 7L194 72" />
        <path d="M182 59L196 73L177 75" stroke-width="3" />
      </svg>
      <div class="absolute left-[1802px] top-[2833px] w-[94px] h-[59px] border-[3px] border-[#e30613] rounded-[9px]"></div>
    </div>
  </body>
</html>
